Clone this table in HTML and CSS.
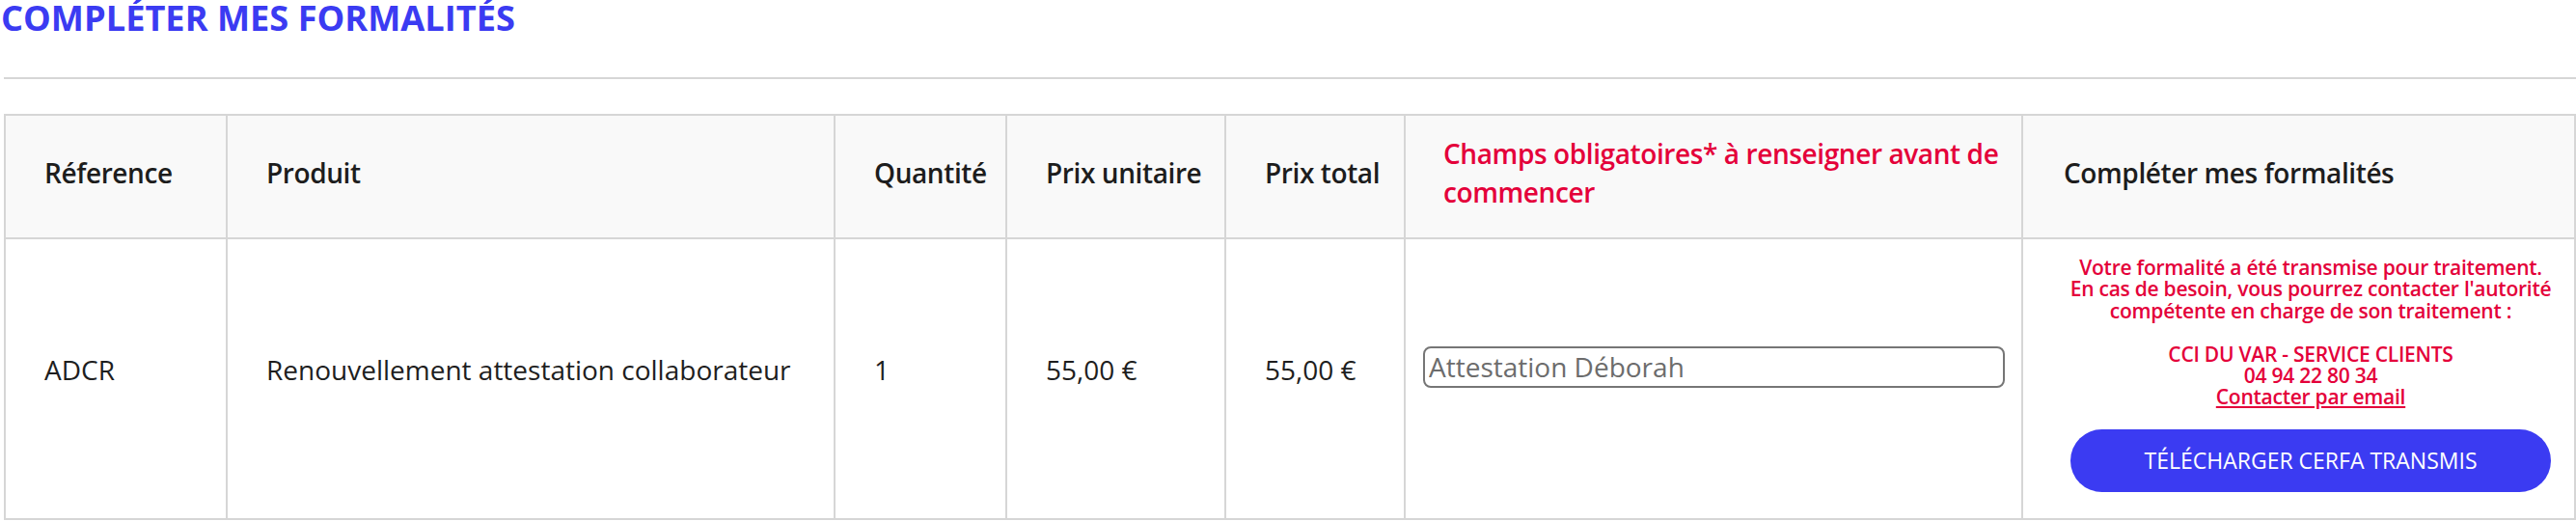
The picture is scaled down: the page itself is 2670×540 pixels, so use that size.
FILE: index.html
```html
<!DOCTYPE html>
<html lang="fr">
<head>
<meta charset="utf-8">
<title>Compléter mes formalités</title>
<link rel="stylesheet" href="styles.css">
</head>
<body>
<div class="page">
  <h2 class="title">COMPLÉTER MES FORMALITÉS</h2>
  <hr class="sep">
  <table class="cart">
    <colgroup>
      <col class="c-ref">
      <col class="c-prod">
      <col class="c-qty">
      <col class="c-unit">
      <col class="c-total">
      <col class="c-field">
      <col class="c-action">
    </colgroup>
    <thead>
      <tr>
        <th>Réference</th>
        <th>Produit</th>
        <th>Quantité</th>
        <th>Prix unitaire</th>
        <th>Prix total</th>
        <th class="required">Champs obligatoires* à renseigner avant de commencer</th>
        <th class="last-head">Compléter mes formalités</th>
      </tr>
    </thead>
    <tbody>
      <tr>
        <td>ADCR</td>
        <td>Renouvellement attestation collaborateur</td>
        <td>1</td>
        <td>55,00 €</td>
        <td>55,00 €</td>
        <td class="field-cell"><input class="field" type="text" value="Attestation Déborah"></td>
        <td class="action-cell">
          <p class="notice">Votre formalité a été transmise pour traitement.<br>En cas de besoin, vous pourrez contacter l'autorité compétente en charge de son traitement :<br><br>CCI DU VAR - SERVICE CLIENTS<br>04 94 22 80 34<br><a class="mail" href="#">Contacter par email</a></p>
          <button class="download" type="button">Télécharger cerfa transmis</button>
        </td>
      </tr>
    </tbody>
  </table>
</div>
</body>
</html>
```

FILE: styles.css
```css
html, body {
  margin: 0;
  padding: 0;
  background: #ffffff;
}

body {
  font-family: "Open Sans", "Liberation Sans", sans-serif;
  color: #222222;
  overflow: hidden;
}

.page {
  padding-left: 4px;
}

.title {
  margin: -2px 0 0 -3px;
  font-size: 36.2px;
  line-height: 40px;
  font-weight: 700;
  color: #3b3bf2;
}

.sep {
  margin: 42px 0 36px;
  border: 0;
  height: 2px;
  background: #d6d6d6;
}

.cart {
  width: 2666px;
  table-layout: fixed;
  border-collapse: separate;
  border-spacing: 0;
  border-right: 2px solid #d6d6d6;
  border-bottom: 2px solid #d6d6d6;
}

.c-ref { width: 230px; }
.c-prod { width: 630px; }
.c-qty { width: 178px; }
.c-unit { width: 227px; }
.c-total { width: 186px; }
.c-field { width: 640px; }
.c-action { width: 573px; }

.cart th,
.cart td {
  border-left: 2px solid #d6d6d6;
  border-top: 2px solid #d6d6d6;
  text-align: left;
  vertical-align: middle;
  font-size: 28px;
}

.cart th {
  background: #f9f9f9;
  padding: 19px 16px 27px 40px;
  font-weight: 600;
  line-height: 40px;
  letter-spacing: -0.4px;
  color: #1d1d1d;
}

.cart th.required {
  padding-left: 39px;
  color: #e4003a;
}

.cart th.last-head {
  padding-left: 42px;
}

.cart td {
  padding: 0 16px 19px 40px;
  line-height: 42px;
  font-weight: 400;
  color: #1e1e1e;
}

.cart td.field-cell {
  padding: 0 17px 24px 18px;
}

.field {
  display: block;
  box-sizing: border-box;
  width: 100%;
  height: 43px;
  margin: 0;
  padding: 0 4px;
  border: 2px solid #767676;
  border-radius: 8px;
  background: #ffffff;
  font-family: "Open Sans", "Liberation Sans", sans-serif;
  font-size: 28px;
  color: #6c6c6c;
}

.cart td.action-cell {
  vertical-align: top;
  padding: 18px 10px 27px 35px;
  text-align: center;
}

.notice {
  margin: 0;
  font-size: 21px;
  line-height: 22.4px;
  font-weight: 600;
  letter-spacing: -0.25px;
  color: #e4003a;
}

.mail {
  color: #e4003a;
  text-decoration: underline;
}

.download {
  display: block;
  box-sizing: border-box;
  width: calc(100% - 28px);
  height: 65px;
  margin: 22px 14px 0;
  border: 0;
  border-radius: 33px;
  background: #3b3bf2;
  color: #ffffff;
  font-family: "Open Sans", "Liberation Sans", sans-serif;
  font-size: 23px;
  font-weight: 400;
  text-transform: uppercase;
  cursor: pointer;
}
```
